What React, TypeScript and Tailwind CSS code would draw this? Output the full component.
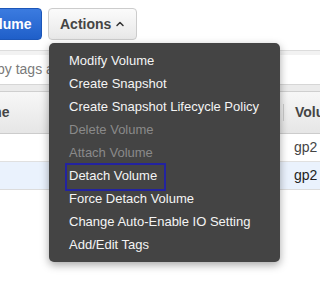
import { ChevronUp } from 'lucide-react';

const menuItems = [
  { label: 'Modify Volume' },
  { label: 'Create Snapshot' },
  { label: 'Create Snapshot Lifecycle Policy' },
  { label: 'Delete Volume', disabled: true },
  { label: 'Attach Volume', disabled: true },
  { label: 'Detach Volume', focused: true },
  { label: 'Force Detach Volume' },
  { label: 'Change Auto-Enable IO Setting' },
  { label: 'Add/Edit Tags' },
];

function ActionsMenu() {
  return (
    <div className="absolute left-[49px] top-[43px] w-[231px] h-[219px] rounded-[5px] bg-[#444444] py-[6px] shadow-[0_3px_8px_rgba(0,0,0,0.35)]">
      {menuItems.map((item) => (
        <div
          key={item.label}
          className={`relative h-[23px] pl-[20px] flex items-center text-[13px] whitespace-nowrap ${
            item.disabled ? 'text-[#8a8a8a]' : 'text-[#f4f4f4]'
          }`}
        >
          {item.focused && (
            <span className="absolute left-[16px] top-[-1px] w-[101px] h-[28px] border-2 border-[#2323a0]" />
          )}
          {item.label}
        </div>
      ))}
    </div>
  );
}

export default function App() {
  return (
    <div className="relative w-[320px] h-[283px] overflow-hidden bg-white font-['Liberation_Sans',Arial,sans-serif]">
      {/* Toolbar */}
      <div className="h-[50px] pt-[8px] flex items-start gap-[6px]">
        <button className="shrink-0 ml-[-76px] w-[118px] h-[32px] rounded-[4px] bg-gradient-to-b from-[#3b7be0] to-[#1f5fc9] border border-[#1c56b8] text-white font-bold text-[14px] text-center">
          Create Volume
        </button>
        <button className="shrink-0 w-[89px] h-[32px] rounded-[4px] border border-[#cccccc] bg-gradient-to-b from-[#fbfbfb] to-[#e8e8e8] pl-[11px] pr-[10px] flex items-center justify-between text-[#444444] font-bold text-[14px]">
          Actions
          <ChevronUp className="w-[12px] h-[12px] text-[#333333]" strokeWidth={3} />
        </button>
      </div>

      {/* Filter bar */}
      <div className="border-t border-[#dcdcdc] bg-[#f2f2f2] h-[5px]" />
      <div className="h-[29px] bg-white flex items-center text-[14px] text-[#7a7a7a] ml-[-38px] whitespace-nowrap">
        Filter by tags and attributes
      </div>
      <div className="h-[8px] border-t border-[#d6d6d6] border-b border-b-[#cfcfcf] bg-[#ebebeb]" />

      {/* Table */}
      <div className="h-[42px] flex items-center bg-gradient-to-b from-[#f7f7f7] to-[#e6e6e6] border-b border-[#cccccc] text-[14px] font-bold text-[#444444] whitespace-nowrap">
        <div className="shrink-0 w-[323px] ml-[-40px]">Volume</div>
        <div className="shrink-0 w-px h-[17px] bg-[#cccccc]" />
        <div className="shrink-0 pl-[11px]">Volume Type</div>
      </div>
      <div className="h-[28px] flex items-center border-b border-[#e0e0e0] bg-white text-[14px] text-[#444444]">
        <div className="shrink-0 w-[294px]" />
        <div>gp2</div>
      </div>
      <div className="h-[28px] flex items-center border-b border-[#dcdcdc] bg-[#eaf2fd] text-[14px] text-[#222222]">
        <div className="shrink-0 w-[294px]" />
        <div>gp2</div>
      </div>

      <ActionsMenu />
    </div>
  );
}
